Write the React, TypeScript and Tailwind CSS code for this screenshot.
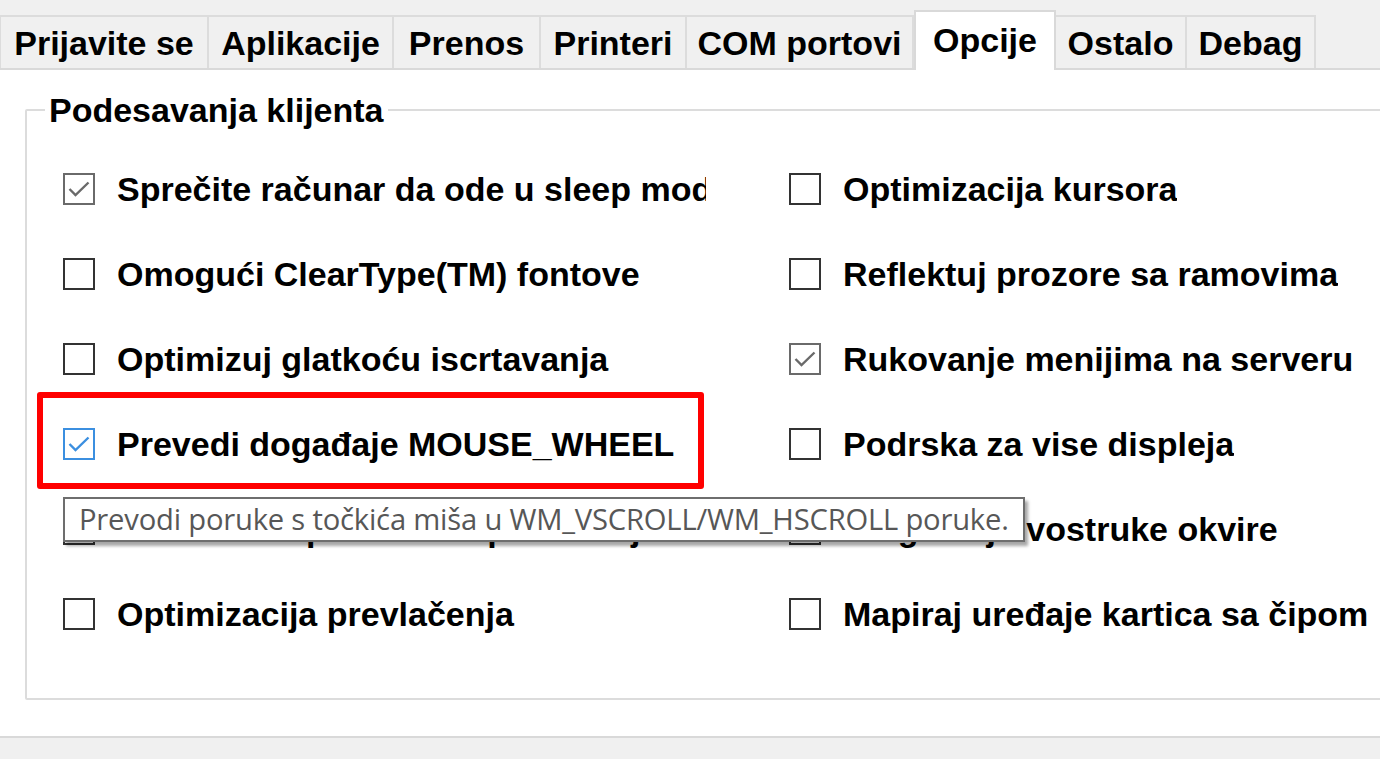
import React from 'react';

type Opt = { label: string; checked?: boolean; focus?: boolean };

const TABS = [
  { name: 'Prijavite se', w: 208 },
  { name: 'Aplikacije', w: 185 },
  { name: 'Prenos', w: 147 },
  { name: 'Printeri', w: 146 },
  { name: 'COM portovi', w: 227 },
  { name: 'Opcije', w: 142, active: true },
  { name: 'Ostalo', w: 131 },
  { name: 'Debag', w: 129 },
];

const LEFT: Opt[] = [
  { label: 'Sprečite računar da ode u sleep mod', checked: true },
  { label: 'Omogući ClearType(TM) fontove' },
  { label: 'Optimizuj glatkoću iscrtavanja' },
  { label: 'Prevedi događaje MOUSE_WHEEL', checked: true, focus: true },
  { label: 'Podrska za prozore sa pomeranjem' },
  { label: 'Optimizacija prevlačenja' },
];

const RIGHT: Opt[] = [
  { label: 'Optimizacija kursora' },
  { label: 'Reflektuj prozore sa ramovima' },
  { label: 'Rukovanje menijima na serveru', checked: true },
  { label: 'Podrska za vise displeja' },
  { label: 'Pregledaj dvostruke okvire' },
  { label: 'Mapiraj uređaje kartica sa čipom' },
];

const CheckBox = ({ checked, focus }: { checked?: boolean; focus?: boolean }) => {
  const color = focus ? '#3b8fe0' : checked ? '#6a6a6a' : '#333333';
  return (
    <svg width="32" height="32" viewBox="0 0 32 32" className="shrink-0">
      <rect x="1" y="1" width="30" height="30" fill="white" stroke={color} strokeWidth="2" />
      {checked && (
        <polyline points="6.5,16 12.5,22 25.5,9.5" fill="none" stroke={color} strokeWidth="2.4" />
      )}
    </svg>
  );
};

const Row = ({ opt, clip }: { opt: Opt; clip?: boolean }) => (
  <div className="flex items-center h-[85px] gap-[22px]">
    <CheckBox checked={opt.checked} focus={opt.focus} />
    <span
      className={`text-[34px] font-bold text-black whitespace-nowrap overflow-hidden leading-[40px] ${
        clip ? 'w-[589px]' : ''
      }`}
    >
      {opt.label}
    </span>
  </div>
);

export default function App() {
  return (
    <div
      className="relative w-[1380px] h-[759px] overflow-hidden bg-[#f0f0f0] select-none"
      style={{ fontFamily: '"Liberation Sans", Arial, sans-serif' }}
    >
      {/* Tab strip */}
      <div className="flex items-end h-[68px] -ml-[1px]">
        {TABS.map((t) =>
          t.active ? (
            <div
              key={t.name}
              className="relative z-10 -mb-[2px] h-[60px] bg-white border-2 border-b-0 border-[#d9d9d9] flex items-start justify-center pt-[8px] text-[34px] font-bold leading-[40px] text-black"
              style={{ width: t.w }}
            >
              {t.name}
            </div>
          ) : (
            <div
              key={t.name}
              className="-ml-[2px] first:ml-0 h-[53px] bg-[#f0f0f0] border-2 border-b-0 border-[#dcdcdc] flex items-center justify-center text-[34px] font-bold leading-[40px] text-black"
              style={{ width: t.w + 2 }}
            >
              {t.name}
            </div>
          )
        )}
      </div>

      {/* Page body */}
      <div className="h-[670px] bg-white border-t-2 border-b-2 border-[#d9d9d9] pt-[20px]">
        <fieldset className="ml-[25px] w-[1400px] h-[610px] border-2 border-[#dcdcdc] rounded-[2px]">
          <legend className="ml-[18px] px-[4px] text-[34px] font-bold leading-[40px] text-black">
            Podesavanja klijenta
          </legend>
          <div className="grid grid-cols-[726px_1fr] pl-[36px] pt-[16px]">
            <div className="flex flex-col">
              {LEFT.map((o) => (
                <Row key={o.label} opt={o} clip />
              ))}
            </div>
            <div className="flex flex-col">
              {RIGHT.map((o) => (
                <Row key={o.label} opt={o} />
              ))}
            </div>
          </div>
        </fieldset>
      </div>

      {/* Highlight marker */}
      <div className="absolute left-[37px] top-[392px] w-[667px] h-[97px] border-[6px] border-[#ff0000] rounded-[3px]" />

      {/* Tooltip */}
      <div
        className="absolute left-[63px] top-[497px] w-[962px] h-[45px] bg-white border-2 border-[#6e6e6e] shadow-[3px_4px_3px_rgba(0,0,0,0.35)] flex items-center pl-[14px] text-[29.2px] text-[#575757] whitespace-nowrap tracking-[-0.2px]"
        style={{ fontFamily: '"Open Sans", "Noto Sans", sans-serif' }}
      >
        Prevodi poruke s točkića miša u WM_VSCROLL/WM_HSCROLL poruke.
      </div>
    </div>
  );
}
